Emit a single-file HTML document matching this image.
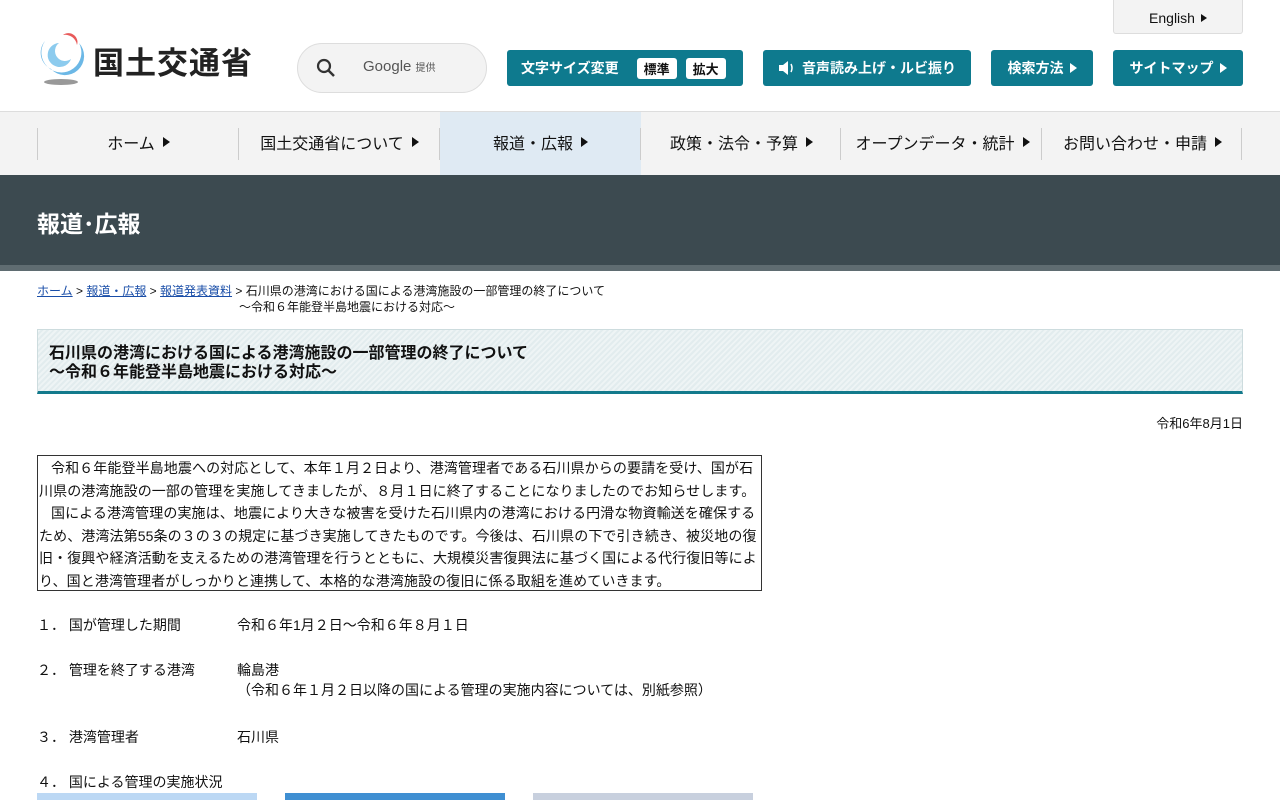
<!DOCTYPE html>
<html><head><meta charset="utf-8"><style>
*{margin:0;padding:0;box-sizing:border-box}
body{width:1280px;height:800px;overflow:hidden;background:#fff;font-family:"Liberation Sans","Noto Sans CJK JP",sans-serif;color:#111;position:relative}
.abs{position:absolute}
.btn{position:absolute;top:50px;height:36px;background:#0e7a8e;color:#fff;border-radius:3px;font-size:14px;font-weight:bold;display:flex;align-items:center;justify-content:center;gap:6px}
.tri{display:inline-block;width:0;height:0;border-left:7px solid currentColor;border-top:5px solid transparent;border-bottom:5px solid transparent}
.nav{position:absolute;top:111px;left:0;width:1280px;height:64px;background:#f3f3f3;border-top:1px solid #ddd}
.ni{position:absolute;top:0;height:60px;width:201px;display:flex;align-items:center;justify-content:center;gap:8px;font-size:16px}
.sep{position:absolute;top:16px;width:1px;height:32px;background:#ccc}
.row{position:absolute;left:37px;font-size:14px}
</style></head><body>
<svg class="abs" style="left:37px;top:33px" width="50" height="54" viewBox="0 0 50 54">
<path d="M8 8 A20 20 0 1 0 42 10 A16 16 0 0 1 14 36 A18 18 0 0 1 8 8Z" fill="#6cb8e6"/>
<path d="M22 10 A12 12 0 1 0 34 26 A8 8 0 0 1 22 10Z" fill="#8ccbee"/>
<path d="M26 2 A12 12 0 0 1 40 12 A9 9 0 0 0 26 2Z" fill="#e85a5a"/>
<ellipse cx="24" cy="49" rx="17" ry="3" fill="#999"/>
</svg>
<div class="abs" style="left:93px;top:38px;font-size:31px;font-weight:bold;letter-spacing:1px;color:#222">国土交通省</div>
<div class="abs" style="left:297px;top:43px;width:190px;height:50px;border:1px solid #ddd;border-radius:25px;background:#f3f3f3">
<svg class="abs" style="left:18px;top:14px" width="20" height="20" viewBox="0 0 20 20"><circle cx="8" cy="8" r="6" stroke="#333" stroke-width="2.2" fill="none"/><path d="M12.5 12.5L18 18" stroke="#333" stroke-width="2.5"/></svg>
<span class="abs" style="left:65px;top:14px;font-size:15px;color:#555">Google <span style="font-size:10px">提供</span></span></div>
<div class="abs" style="left:1113px;top:0;width:130px;height:34px;background:#f3f3f3;border:1px solid #ddd;border-top:none;border-radius:0 0 3px 3px;font-size:14px;display:flex;align-items:center;justify-content:center;gap:6px;padding-top:2px">English <span class="tri" style="border-left-width:6px;border-top-width:4px;border-bottom-width:4px"></span></div>
<div class="btn" style="left:507px;width:236px;justify-content:flex-start;padding-left:14px">文字サイズ変更<span style="margin-left:12px;background:#fff;color:#111;padding:1px 7px;border-radius:3px;font-size:13px">標準</span><span style="margin-left:3px;background:#fff;color:#111;padding:1px 7px;border-radius:3px;font-size:13px">拡大</span></div>
<div class="btn" style="left:763px;width:208px"><svg width="18" height="16" viewBox="0 0 18 16"><path d="M1 5h4l5-4v14l-5-4H1z" fill="#fff"/><path d="M13 4q2 4 0 8" stroke="#fff" fill="none" stroke-width="1.5"/></svg>音声読み上げ・ルビ振り</div>
<div class="btn" style="left:991px;width:102px">検索方法 <span class="tri"></span></div>
<div class="btn" style="left:1113px;width:130px">サイトマップ <span class="tri"></span></div>
<div class="nav">
<div class="ni" style="left:440px;background:#dfeaf3;height:63px"></div>
<div class="ni" style="left:38px">ホーム <span class="tri"></span></div>
<div class="ni" style="left:239px">国土交通省について <span class="tri"></span></div>
<div class="ni" style="left:440px">報道・広報 <span class="tri"></span></div>
<div class="ni" style="left:641px">政策・法令・予算 <span class="tri"></span></div>
<div class="ni" style="left:842px">オープンデータ・統計 <span class="tri"></span></div>
<div class="ni" style="left:1042px">お問い合わせ・申請 <span class="tri"></span></div>
<div class="sep" style="left:37px"></div><div class="sep" style="left:238px"></div><div class="sep" style="left:439px"></div><div class="sep" style="left:640px"></div><div class="sep" style="left:840px"></div><div class="sep" style="left:1041px"></div><div class="sep" style="left:1241px"></div>
</div>
<div class="abs" style="left:0;top:175px;width:1280px;height:90px;background:#3c4a50"></div>
<div class="abs" style="left:0;top:265px;width:1280px;height:6px;background:#5f6c71"></div>
<div class="abs" style="left:37px;top:205px;color:#fff;font-size:23px;font-weight:bold">報道･広報</div>
<div class="abs" style="left:37px;top:283px;font-size:12px;line-height:16px"><a style="color:#1a4ea8;text-decoration:underline">ホーム</a> &gt; <a style="color:#1a4ea8;text-decoration:underline">報道・広報</a> &gt; <a style="color:#1a4ea8;text-decoration:underline">報道発表資料</a> &gt; 石川県の港湾における国による港湾施設の一部管理の終了について<br><span style="padding-left:202px">～令和６年能登半島地震における対応～</span></div>
<div class="abs" style="left:37px;top:329px;width:1206px;height:65px;border:1px solid #cddcde;border-bottom:3px solid #137a8c;background:repeating-linear-gradient(135deg,#eef4f5 0 2px,#e2ecee 2px 4px);padding:14px 0 0 11px;font-size:16px;font-weight:bold;line-height:19px">石川県の港湾における国による港湾施設の一部管理の終了について<br>～令和６年能登半島地震における対応～</div>
<div class="abs" style="right:37px;top:413px;font-size:13px">令和6年8月1日</div>
<div class="abs" style="left:37px;top:455px;width:725px;height:136px;border:1px solid #333;font-size:14px;line-height:22.6px;padding:1px 1px 0 1px;letter-spacing:0.1px">&nbsp;&nbsp;&nbsp;令和６年能登半島地震への対応として、本年１月２日より、港湾管理者である石川県からの要請を受け、国が石川県の港湾施設の一部の管理を実施してきましたが、８月１日に終了することになりましたのでお知らせします。<br>&nbsp;&nbsp;&nbsp;国による港湾管理の実施は、地震により大きな被害を受けた石川県内の港湾における円滑な物資輸送を確保するため、港湾法第55条の３の３の規定に基づき実施してきたものです。今後は、石川県の下で引き続き、被災地の復旧・復興や経済活動を支えるための港湾管理を行うとともに、大規模災害復興法に基づく国による代行復旧等により、国と港湾管理者がしっかりと連携して、本格的な港湾施設の復旧に係る取組を進めていきます。</div>
<div class="row" style="top:615px">１． 国が管理した期間<span class="abs" style="left:200px;white-space:nowrap">令和６年1月２日～令和６年８月１日</span></div>
<div class="row" style="top:660px">２． 管理を終了する港湾<span class="abs" style="left:200px;white-space:nowrap">輪島港<br>（令和６年１月２日以降の国による管理の実施内容については、別紙参照）</span></div>
<div class="row" style="top:727px">３． 港湾管理者<span class="abs" style="left:200px;white-space:nowrap">石川県</span></div>
<div class="row" style="top:772px">４． 国による管理の実施状況</div>
<div class="abs" style="left:37px;top:793px;width:220px;height:7px;background:#bcd8f4"></div>
<div class="abs" style="left:285px;top:793px;width:220px;height:7px;background:#3f8fd2"></div>
<div class="abs" style="left:533px;top:793px;width:220px;height:7px;background:#c8d0de"></div>
</body></html>
